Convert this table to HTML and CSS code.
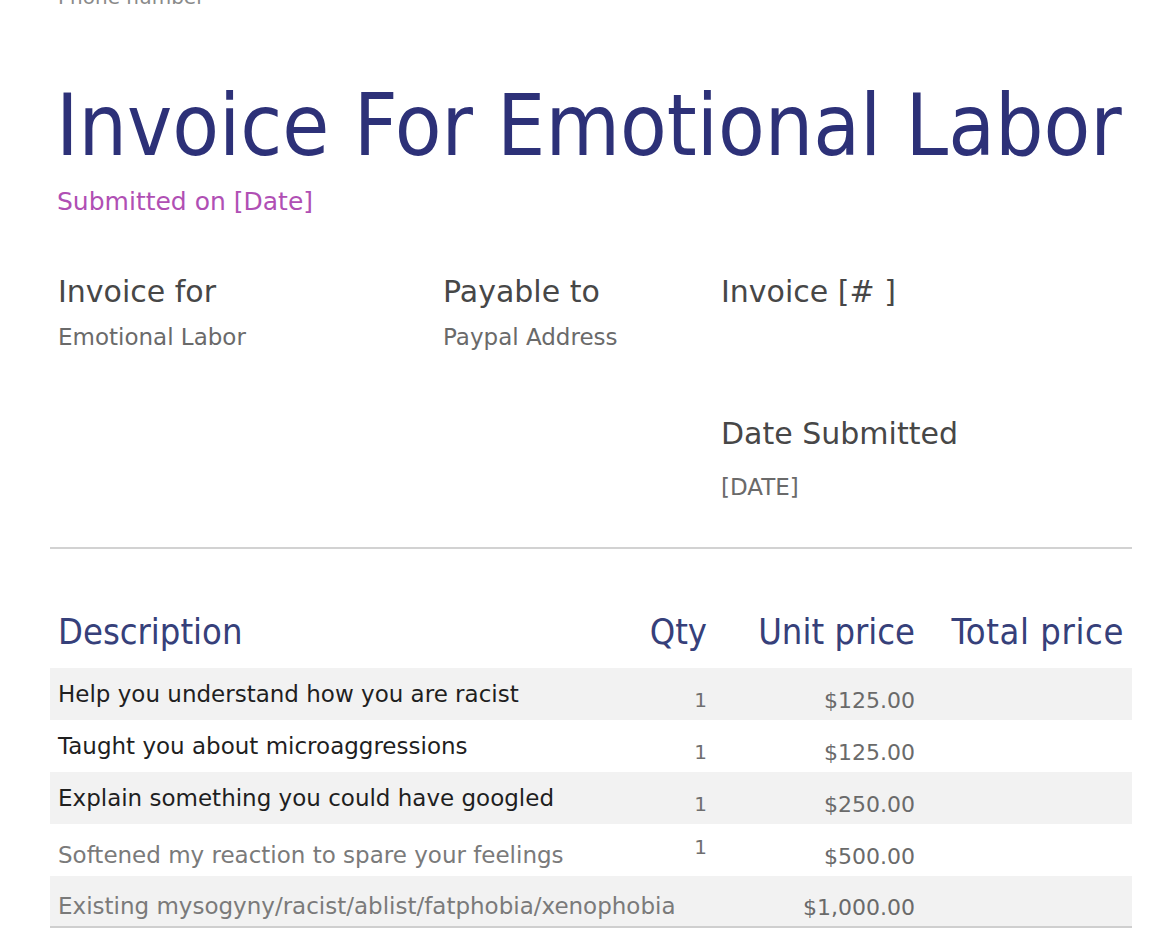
FILE: index.html
```html
<!DOCTYPE html>
<html lang="en">
<head>
<meta charset="utf-8">
<title>Invoice For Emotional Labor</title>
<link rel="stylesheet" href="styles.css">
</head>
<body>
<div class="page">
  <div class="phone">Phone number</div>
  <h1 class="title">Invoice For Emotional Labor</h1>
  <div class="submitted">Submitted on [Date]</div>

  <div class="meta">
    <div class="meta-col col-for">
      <div class="label">Invoice for</div>
      <div class="value">Emotional Labor</div>
    </div>
    <div class="meta-col col-pay">
      <div class="label">Payable to</div>
      <div class="value">Paypal Address</div>
    </div>
    <div class="meta-col col-inv">
      <div class="label">Invoice [# ]</div>
      <div class="spacer"></div>
      <div class="label">Date Submitted</div>
      <div class="value value-date">[DATE]</div>
    </div>
  </div>

  <hr class="rule">

  <div class="table">
    <div class="thead">
      <div class="th">Description</div>
      <div class="th num">Qty</div>
      <div class="th num">Unit price</div>
      <div class="th num">Total price</div>
    </div>
    <div class="tr shade">
      <div class="td desc">Help you understand how you are racist</div>
      <div class="td num qty">1</div>
      <div class="td num price">$125.00</div>
      <div class="td num"></div>
    </div>
    <div class="tr">
      <div class="td desc">Taught you about microaggressions</div>
      <div class="td num qty">1</div>
      <div class="td num price">$125.00</div>
      <div class="td num"></div>
    </div>
    <div class="tr shade">
      <div class="td desc">Explain something you could have googled</div>
      <div class="td num qty">1</div>
      <div class="td num price">$250.00</div>
      <div class="td num"></div>
    </div>
    <div class="tr light">
      <div class="td desc low">Softened my reaction to spare your feelings</div>
      <div class="td num qty up">1</div>
      <div class="td num price">$500.00</div>
      <div class="td num"></div>
    </div>
    <div class="tr shade light last">
      <div class="td desc low">Existing mysogyny/racist/ablist/fatphobia/xenophobia</div>
      <div class="td num qty"></div>
      <div class="td num price">$1,000.00</div>
      <div class="td num"></div>
    </div>
  </div>
</div>
</body>
</html>
```

FILE: styles.css
```css
html, body {
  margin: 0;
  padding: 0;
  background: #ffffff;
}

body {
  font-family: "DejaVu Sans", "Open Sans", sans-serif;
  color: #333333;
  overflow: hidden;
}

.page {
  width: 1082px;
  padding-left: 50px;
}

.phone {
  margin-top: -15px;
  padding-left: 8px;
  font-size: 20px;
  line-height: 24px;
  color: #8a8a8a;
}

.title {
  margin: 69px 0 0 0;
  padding-left: 6px;
  font-family: "DejaVu Sans Condensed", "DejaVu Sans", sans-serif;
  font-size: 85px;
  line-height: 96px;
  font-weight: normal;
  color: #2d3178;
  letter-spacing: 0;
}

.submitted {
  margin-top: 13px;
  padding-left: 7px;
  font-size: 25px;
  line-height: 30px;
  color: #b04fb4;
}

.meta {
  display: flex;
  margin-top: 57px;
  padding-left: 8px;
}

.meta-col {
  display: flex;
  flex-direction: column;
}

.col-for { width: 385px; }
.col-pay { width: 278px; }
.col-inv { flex: 1; }

.label {
  font-size: 30px;
  line-height: 36px;
  color: #474747;
}

.value {
  margin-top: 13px;
  font-size: 23px;
  line-height: 28px;
  color: #6a6a6a;
}

.value.value-date { margin-top: 21px; }

.spacer { height: 106px; }

.rule {
  margin: 46px 0 0 0;
  border: 0;
  height: 2px;
  background: #d2d2d2;
}

.table {
  margin-top: 63px;
}

.thead,
.tr {
  display: grid;
  grid-template-columns: 542px 107px 208px 209px;
  padding: 0 8px;
  align-items: center;
}

.thead {
  height: 56px;
  align-items: start;
}

.th {
  font-family: "DejaVu Sans Condensed", "DejaVu Sans", sans-serif;
  font-size: 36px;
  line-height: 40px;
  color: #36407a;
  white-space: nowrap;
}

.th.num:last-child { letter-spacing: 0.6px; }

.num { text-align: right; }

.tr {
  height: 52px;
  font-size: 23px;
  color: #1f1f1f;
}

.tr.shade { background: #f2f2f2; }

.tr.light { color: #7a7a7a; }

.tr.last { border-bottom: 2px solid #cfcfcf; height: 50px; }

.td {
  line-height: 26px;
  white-space: nowrap;
}

.qty {
  padding-top: 12px;
  font-size: 20px;
  color: #6f6f6f;
}

.qty.up { padding-top: 0; padding-bottom: 6px; }

.price {
  padding-top: 14px;
  font-size: 22px;
  color: #6a6a6a;
}

.desc.low { padding-top: 10px; }
```
